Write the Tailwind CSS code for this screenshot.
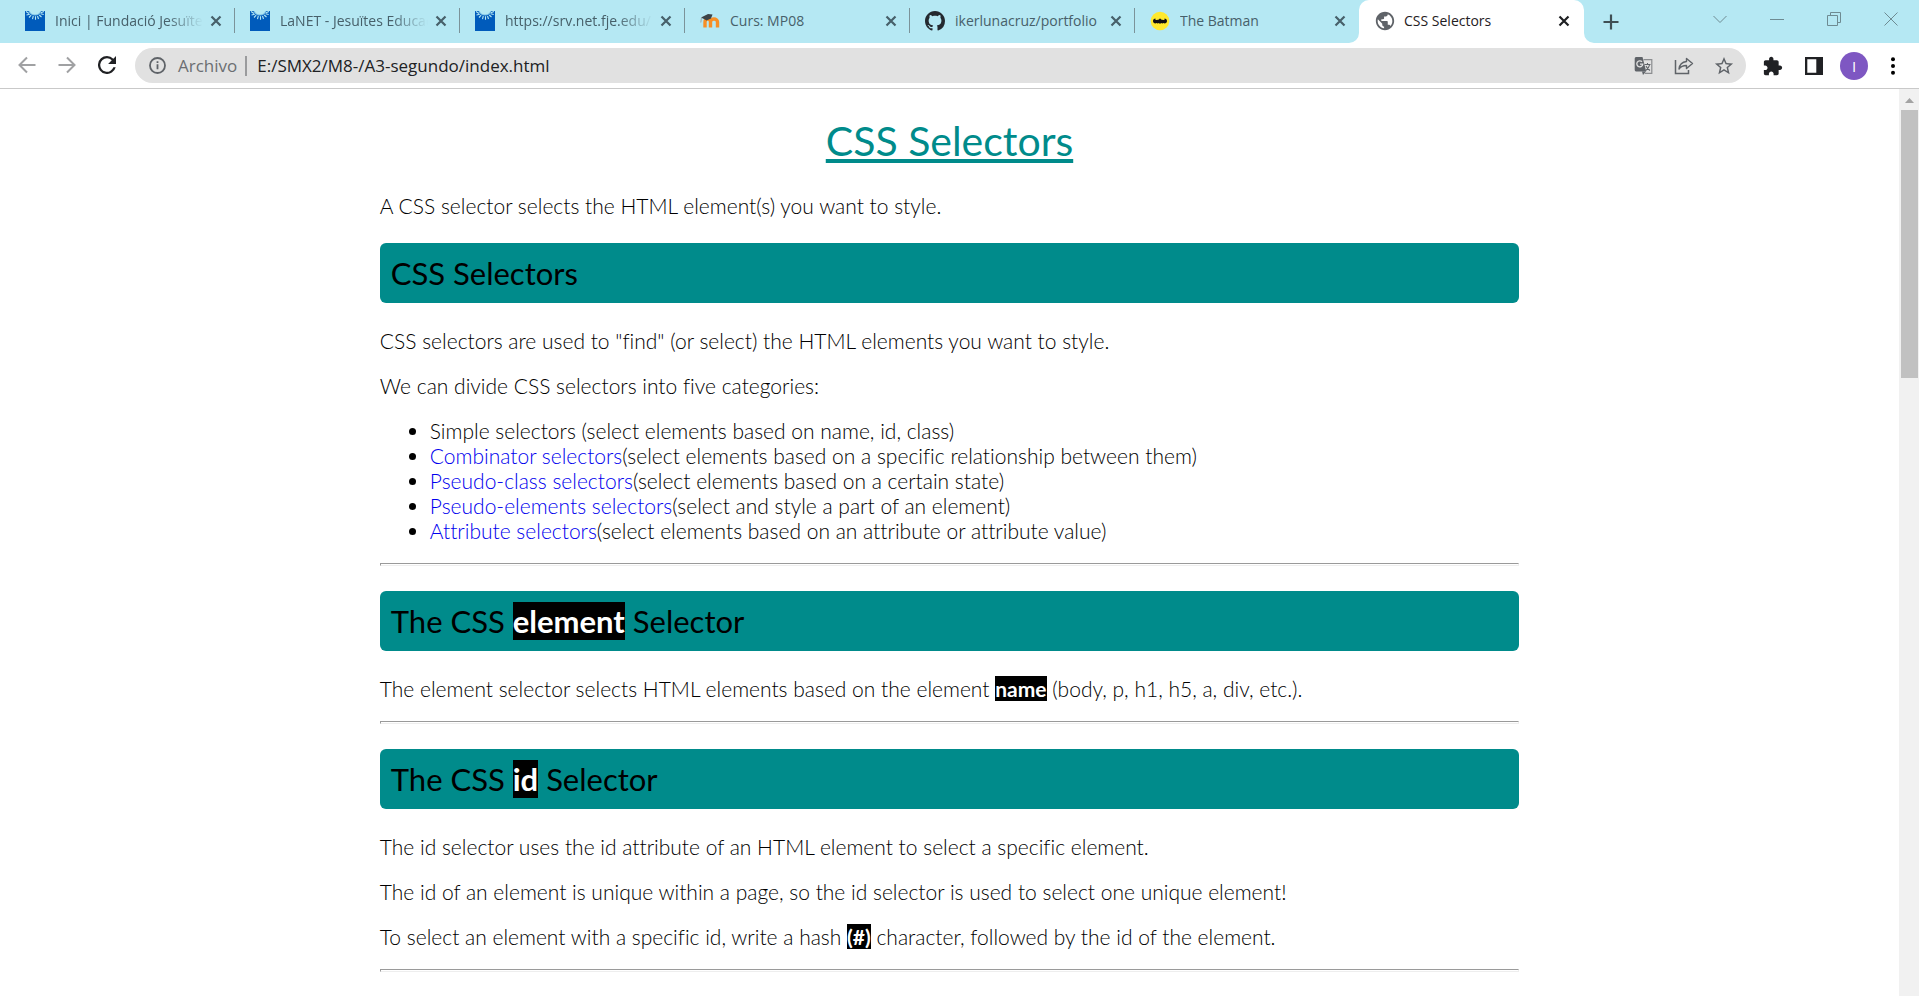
<!DOCTYPE html>
<html lang="en">
<head>
<meta charset="utf-8">
<title>CSS Selectors</title>
<script src="https://cdn.jsdelivr.net/npm/@tailwindcss/browser@4"></script>
</head>
<body class="flex h-screen flex-col overflow-hidden bg-white font-['Open_Sans',sans-serif] text-black">

<!-- shared symbols -->
<svg class="hidden" aria-hidden="true">
  <symbol id="close" viewBox="0 0 12 12"><path d="M1.5 1.5l9 9M10.5 1.5l-9 9" stroke="currentColor" stroke-width="2.2" fill="none"/></symbol>
  <symbol id="jesuites" viewBox="0 0 20 20"><path d="M0 0h20v20H0z" fill="#005bbb"/><g stroke="#b5e8f3" stroke-width="1.1" fill="none"><path d="M1 .5l3 2M1.500 4l3.300-.8M4 6.500l2.200-2.300M7.500 8.200l.8-3.200M10.500 8.700V5.200M13.500 8l-1-3M16.500 6l-2.300-2M18.700 3.500l-3.200-.7M19 .5l-3 1.200"/></g><path d="M3.500 0h13c-1 3-3.500 4.500-6.500 4.500S4.500 3 3.500 0z" fill="#7cc0e4"/><path d="M4.500 0h11c-1 2.500-3 3.500-5.500 3.500S5.500 2.500 4.500 0z" fill="#b5e8f3"/></symbol>
</svg>

<header class="shrink-0">
  <nav aria-label="Tabs" class="flex h-[43px] bg-[#b5e8f3] pl-[10px] text-[14px] text-[#47606a]">
    <div class="flex w-[225px] min-w-0 items-center pl-[15px] pb-[2px]">
      <svg class="size-5 shrink-0"><use href="#jesuites"/></svg>
      <a href="#" class="ml-[10px] w-[148px] overflow-hidden whitespace-nowrap [mask-image:linear-gradient(to_right,black_112px,transparent_148px)]">Inici | Fundació Jesuïtes</a>
      <button aria-label="Close tab" class="ml-[7px] size-3"><svg class="size-3"><use href="#close"/></svg></button>
      <span class="ml-auto h-[25px] w-px bg-[#7b9399]"></span>
    </div>
    <div class="flex w-[225px] min-w-0 items-center pl-[15px] pb-[2px]">
      <svg class="size-5 shrink-0"><use href="#jesuites"/></svg>
      <a href="#" class="ml-[10px] w-[148px] overflow-hidden whitespace-nowrap [mask-image:linear-gradient(to_right,black_112px,transparent_148px)]">LaNET - Jesuïtes Educació</a>
      <button aria-label="Close tab" class="ml-[7px] size-3"><svg class="size-3"><use href="#close"/></svg></button>
      <span class="ml-auto h-[25px] w-px bg-[#7b9399]"></span>
    </div>
    <div class="flex w-[225px] min-w-0 items-center pl-[15px] pb-[2px]">
      <svg class="size-5 shrink-0"><use href="#jesuites"/></svg>
      <a href="#" class="ml-[10px] w-[148px] overflow-hidden whitespace-nowrap [mask-image:linear-gradient(to_right,black_112px,transparent_148px)]">https://srv.net.fje.edu/</a>
      <button aria-label="Close tab" class="ml-[7px] size-3"><svg class="size-3"><use href="#close"/></svg></button>
      <span class="ml-auto h-[25px] w-px bg-[#7b9399]"></span>
    </div>
    <div class="flex w-[225px] min-w-0 items-center pl-[15px] pb-[2px]">
      <svg class="size-5 shrink-0" viewBox="0 0 20 20"><path d="M5 16.500V11c0-4 5.500-4 5.500 0v5.500M10.500 11c0-4 7-4 7 0v5.500" fill="none" stroke="#f78f26" stroke-width="3.400"/><path d="M1 6.500L8 3l4.500.5-1.500 4-4.500 2L4 8z" fill="#3c4347"/><path d="M1.500 6.500l-.7 5" stroke="#9ba7a9" stroke-width="1"/></svg>
      <a href="#" class="ml-[10px] w-[148px] overflow-hidden whitespace-nowrap">Curs: MP08</a>
      <button aria-label="Close tab" class="ml-[7px] size-3"><svg class="size-3"><use href="#close"/></svg></button>
      <span class="ml-auto h-[25px] w-px bg-[#7b9399]"></span>
    </div>
    <div class="flex w-[225px] min-w-0 items-center pl-[15px] pb-[2px]">
      <svg class="size-5 shrink-0" viewBox="0 0 16 16"><path fill="#24292f" d="M8 0C3.580 0 0 3.580 0 8c0 3.540 2.290 6.530 5.470 7.590.4.070.55-.17.55-.38 0-.19-.010-.82-.010-1.490-2.010.37-2.530-.49-2.690-.94-.090-.23-.48-.94-.82-1.130-.28-.15-.68-.52-.010-.53.63-.010 1.080.58 1.230.82.72 1.210 1.870.87 2.330.66.070-.52.28-.87.51-1.070-1.780-.2-3.640-.89-3.640-3.950 0-.87.31-1.590.82-2.150-.080-.2-.36-1.020.080-2.120 0 0 .67-.21 2.200.82.64-.18 1.320-.27 2-.27s1.360.090 2 .27c1.530-1.040 2.200-.82 2.200-.82.44 1.100.16 1.920.080 2.120.51.56.82 1.270.82 2.150 0 3.070-1.870 3.750-3.650 3.950.29.25.54.73.54 1.480 0 1.070-.010 1.930-.010 2.200 0 .21.15.46.55.38A8.010 8.010 0 0 0 16 8c0-4.420-3.580-8-8-8z"/></svg>
      <a href="#" class="ml-[10px] w-[148px] overflow-hidden whitespace-nowrap">ikerlunacruz/portfolio</a>
      <button aria-label="Close tab" class="ml-[7px] size-3"><svg class="size-3"><use href="#close"/></svg></button>
      <span class="ml-auto h-[25px] w-px bg-[#7b9399]"></span>
    </div>
    <div class="flex w-[224px] min-w-0 items-center pl-[15px] pb-[2px]">
      <svg class="size-5 shrink-0" viewBox="0 0 20 20"><circle cx="10" cy="10" r="9.300" fill="#ffe92e"/><path d="M3 10c0-1.500 1-2.500 2.500-2.500-.3 1 .2 1.500 1 1.500L8 8.800l1-.3.300-1 .7.500.7-.5.300 1 1 .3 1.500.2c.8 0 1.300-.5 1-1.500C16 7.500 17 8.500 17 10s-1 2.300-2.500 2.500c-.3-.7-1.500-.7-2 0L11 12l-1 1-1-1-1.500.5c-.5-.7-1.700-.7-2 0C4 12.300 3 11.500 3 10z" fill="#111"/></svg>
      <a href="#" class="ml-[10px] w-[148px] overflow-hidden whitespace-nowrap">The Batman</a>
      <button aria-label="Close tab" class="ml-[6px] size-3"><svg class="size-3"><use href="#close"/></svg></button>
    </div>
    <div class="relative flex w-[225px] min-w-0 items-center rounded-t-[10px] bg-white pl-[15px] pb-[2px] text-[#1f2023]">
      <svg class="absolute -left-[10px] bottom-0 size-[10px]" viewBox="0 0 10 10"><path d="M10 0v10H0A10 10 0 0 0 10 0z" fill="#fff"/></svg>
      <svg class="absolute -right-[10px] bottom-0 size-[10px]" viewBox="0 0 10 10"><path d="M0 0v10h10A10 10 0 0 1 0 0z" fill="#fff"/></svg>
      <svg class="size-[22px] shrink-0" viewBox="0 0 24 24"><path fill="#5f6368" d="M12 2C6.480 2 2 6.480 2 12s4.480 10 10 10 10-4.480 10-10S17.520 2 12 2zm-1 17.930c-3.950-.49-7-3.850-7-7.930 0-.62.080-1.210.21-1.790L9 15v1c0 1.100.9 2 2 2v1.930zm6.900-2.540c-.26-.81-1-1.390-1.900-1.390h-1v-3c0-.55-.45-1-1-1H8v-2h2c.55 0 1-.45 1-1V7h2c1.100 0 2-.9 2-2v-.41c2.930 1.190 5 4.060 5 7.410 0 2.080-.8 3.970-2.100 5.390z"/></svg>
      <a href="#" aria-current="page" class="ml-[8px] w-[148px] overflow-hidden whitespace-nowrap">CSS Selectors</a>
      <button aria-label="Close tab" class="ml-[6px] size-3"><svg class="size-3"><use href="#close"/></svg></button>
    </div>
    <button aria-label="New tab" class="ml-[19px] flex items-center text-[#3f4f54]"><svg class="size-4" viewBox="0 0 16 16"><path d="M8 .5v15M.5 8h15" stroke="currentColor" stroke-width="2.200"/></svg></button>
    <div class="ml-auto flex items-center gap-[43px] pb-[6px] pr-[21px] text-[#6e8b92]">
      <button aria-label="Search tabs"><svg class="block size-[14px]" viewBox="0 0 14 14"><path d="M.5 4L7 10.500 13.500 4" fill="none" stroke="currentColor"/></svg></button>
      <button aria-label="Minimise"><svg class="block size-[14px]" viewBox="0 0 14 14"><path d="M0 7.500h14" stroke="currentColor"/></svg></button>
      <button aria-label="Restore"><svg class="block size-[14px]" viewBox="0 0 14 14"><path d="M.5 3.500h10v10H.5zM3.500 3V.5h10v10H11" fill="none" stroke="currentColor"/></svg></button>
      <button aria-label="Close window"><svg class="block size-[14px]" viewBox="0 0 14 14"><path d="M.5.5l13 13M13.500.5l-13 13" stroke="currentColor"/></svg></button>
    </div>
  </nav>

  <div class="flex h-[46px] items-center border-b border-[#c9c9c9] pl-[18px] pr-[24px] text-[#202124]">
    <div class="flex items-center gap-[22px] pb-[1px]">
      <button aria-label="Back" class="text-[#a0a1a3]"><svg class="block size-[18px]" viewBox="0 0 18 18"><path d="M17.500 9h-16M9 1.500L1.500 9 9 16.500" fill="none" stroke="currentColor" stroke-width="2"/></svg></button>
      <button aria-label="Forward" class="text-[#a0a1a3]"><svg class="block size-[18px]" viewBox="0 0 18 18"><path d="M.5 9h16M9 1.500L16.500 9 9 16.500" fill="none" stroke="currentColor" stroke-width="2"/></svg></button>
      <button aria-label="Reload"><svg class="block size-[18px]" viewBox="4 4 16 16"><path fill="currentColor" d="M17.650 6.350A7.958 7.958 0 0 0 12 4a8 8 0 1 0 7.730 10h-2.080A6 6 0 1 1 12 6c1.660 0 3.140.69 4.220 1.780L13 11h7V4l-2.350 2.350z"/></svg></button>
    </div>
    <div class="ml-[19px] flex h-[35px] min-w-0 flex-1 items-center rounded-full bg-[#e1e1e1] pl-[14px] pr-[12px] text-[17px]">
      <svg class="size-[17px] shrink-0" viewBox="0 0 17 17"><circle cx="8.500" cy="8.500" r="7.500" fill="none" stroke="#5f6368" stroke-width="1.800"/><path d="M8.500 7.300v5M8.500 4.200v1.900" stroke="#5f6368" stroke-width="1.800"/></svg>
      <label for="address" class="ml-[12px] text-[#6b6e72]">Archivo</label>
      <span class="ml-[8px] h-5 w-[2px] bg-[#9a9b9d]"></span>
      <input id="address" type="text" value="E:/SMX2/M8-/A3-segundo/index.html" class="ml-[10px] min-w-0 flex-1 bg-transparent outline-none">
      <div class="flex items-center gap-5 text-[#5f6368]">
        <button aria-label="Translate"><svg class="block size-5" viewBox="0 0 20 20"><path d="M9.500 3.700h8.300v13.600h-7" fill="none" stroke="#8b8d90" stroke-width="1.200"/><path d="M10.500 8.500h6M13.500 7v1.500M15.700 8.500c-.5 2.500-2 4.500-4 6M12 10c.8 1.800 2.200 3.300 4 4.500" fill="none" stroke="currentColor" stroke-width="1.100"/><path d="M2 1h6.500l3.700 14.500H2A1.500 1.500 0 0 1 .7 14V2.500A1.500 1.500 0 0 1 2 1z" fill="currentColor"/><path d="M12 15.500L9 19l-1-3.500z" fill="currentColor"/><path d="M8 5.800a3 3 0 1 0 .8 2.400H6" fill="none" stroke="#e1e1e1" stroke-width="1.300"/></svg></button>
        <button aria-label="Share"><svg class="block size-5" viewBox="0 0 20 20"><path d="M1.500 4v13.500h13V14" fill="none" stroke="currentColor" stroke-width="1.500"/><path d="M12.500 2.500l6 5-6 5v-3c-3.500 0-5.800 1-7.500 3.500.5-4.200 3-7 7.500-7.500z" fill="none" stroke="currentColor" stroke-width="1.400" stroke-linejoin="round"/></svg></button>
        <button aria-label="Bookmark"><svg class="block size-5" viewBox="1 1 22 22"><path fill="currentColor" d="M22 9.240l-7.190-.62L12 2 9.190 8.630 2 9.240l5.460 4.730L5.820 21 12 17.270 18.180 21l-1.630-7.030L22 9.240zM12 15.400l-3.760 2.270 1-4.280-3.320-2.880 4.380-.38L12 6.100l1.710 4.040 4.380.38-3.320 2.880 1 4.280L12 15.400z"/></svg></button>
      </div>
    </div>
    <div class="ml-[17px] flex items-center">
      <button aria-label="Extensions"><svg class="block size-5" viewBox="1 0 23 23"><path fill="currentColor" d="M20.500 11H19V7c0-1.100-.9-2-2-2h-4V3.500C13 2.120 11.880 1 10.500 1S8 2.120 8 3.500V5H4c-1.100 0-1.990.9-1.990 2v3.800H3.500c1.490 0 2.700 1.210 2.700 2.700s-1.210 2.700-2.700 2.700H2V20c0 1.100.9 2 2 2h3.800v-1.500c0-1.490 1.210-2.700 2.700-2.700 1.490 0 2.700 1.210 2.700 2.700V22H17c1.100 0 2-.9 2-2v-4h1.500c1.380 0 2.500-1.120 2.500-2.500S21.880 11 20.500 11z"/></svg></button>
      <button aria-label="Side panel" class="ml-[22px]"><svg class="block size-[18px]" viewBox="0 0 18 18"><path fill="currentColor" fill-rule="evenodd" d="M0 0h18v18H0zM2.300 2.300v13.400h9V2.300z"/></svg></button>
      <button aria-label="Profile" class="ml-[17px] size-7 rounded-full bg-[#7e57c2] text-[15px] leading-7 text-white">I</button>
      <button aria-label="Menu" class="ml-[23px]"><svg class="block h-[18px] w-1" viewBox="0 0 4 18"><circle cx="2" cy="2.200" r="2"/><circle cx="2" cy="9" r="2"/><circle cx="2" cy="15.800" r="2"/></svg></button>
    </div>
  </div>
</header>

<div class="flex min-h-0 flex-1">
  <main class="min-w-0 flex-1 overflow-hidden font-['Lato',sans-serif] text-[21px] leading-[25px] font-light [font-variant-ligatures:none]">
    <article class="mx-auto w-3/5">
      <h1 class="my-[27px] text-center text-[41px] leading-[50px] font-normal text-[#008b8b] underline decoration-[4px] underline-offset-[3px]">CSS Selectors</h1>
      <p>A CSS selector selects the HTML element(s) you want to style.</p>

      <h2 class="my-[25px] rounded-md bg-[#008b8b] px-[11px] py-[11px] text-[31px] leading-[38px] font-normal">CSS Selectors</h2>
      <p class="my-5">CSS selectors are used to "find" (or select) the HTML elements you want to style.</p>
      <p class="my-5">We can divide CSS selectors into five categories:</p>
      <ul class="my-5 list-disc pl-[50px]">
        <li>Simple selectors (select elements based on name, id, class)</li>
        <li><a href="#" class="text-[#0000ee]">Combinator selectors</a>(select elements based on a specific relationship between them)</li>
        <li><a href="#" class="text-[#0000ee]">Pseudo-class selectors</a>(select elements based on a certain state)</li>
        <li><a href="#" class="text-[#0000ee]">Pseudo-elements selectors</a>(select and style a part of an element)</li>
        <li><a href="#" class="text-[#0000ee]">Attribute selectors</a>(select elements based on an attribute or attribute value)</li>
      </ul>
      <hr class="h-[3px] border border-[#eeeeee] border-t-[#9a9a9a] border-l-[#9a9a9a]">

      <h2 class="my-[25px] rounded-md bg-[#008b8b] px-[11px] py-[11px] text-[31px] leading-[38px] font-normal">The CSS <span class="bg-black font-bold text-white">element</span> Selector</h2>
      <p class="my-5">The element selector selects HTML elements based on the element <strong class="bg-black font-bold text-white">name</strong> (body, p, h1, h5, a, div, etc.).</p>
      <hr class="h-[3px] border border-[#eeeeee] border-t-[#9a9a9a] border-l-[#9a9a9a]">

      <h2 class="my-[25px] rounded-md bg-[#008b8b] px-[11px] py-[11px] text-[31px] leading-[38px] font-normal">The CSS <span class="bg-black font-bold text-white">id</span> Selector</h2>
      <p class="my-5">The id selector uses the id attribute of an HTML element to select a specific element.</p>
      <p class="my-5">The id of an element is unique within a page, so the id selector is used to select one unique element!</p>
      <p class="my-5">To select an element with a specific id, write a hash <strong class="bg-black font-bold text-white">(#)</strong> character, followed by the id of the element.</p>
      <hr class="h-[3px] border border-[#eeeeee] border-t-[#9a9a9a] border-l-[#9a9a9a]">
    </article>
  </main>
  <div aria-hidden="true" class="flex w-5 shrink-0 flex-col bg-[#f1f1f1] pr-px pl-[2px]">
    <svg class="h-[21px] w-full shrink-0" viewBox="0 0 17 21"><path d="M4 14l4.500-5 4.500 5z" fill="#a3a3a3"/></svg>
    <div class="h-[268px] bg-[#c1c1c1]"></div>
  </div>
</div>
</body>
</html>
